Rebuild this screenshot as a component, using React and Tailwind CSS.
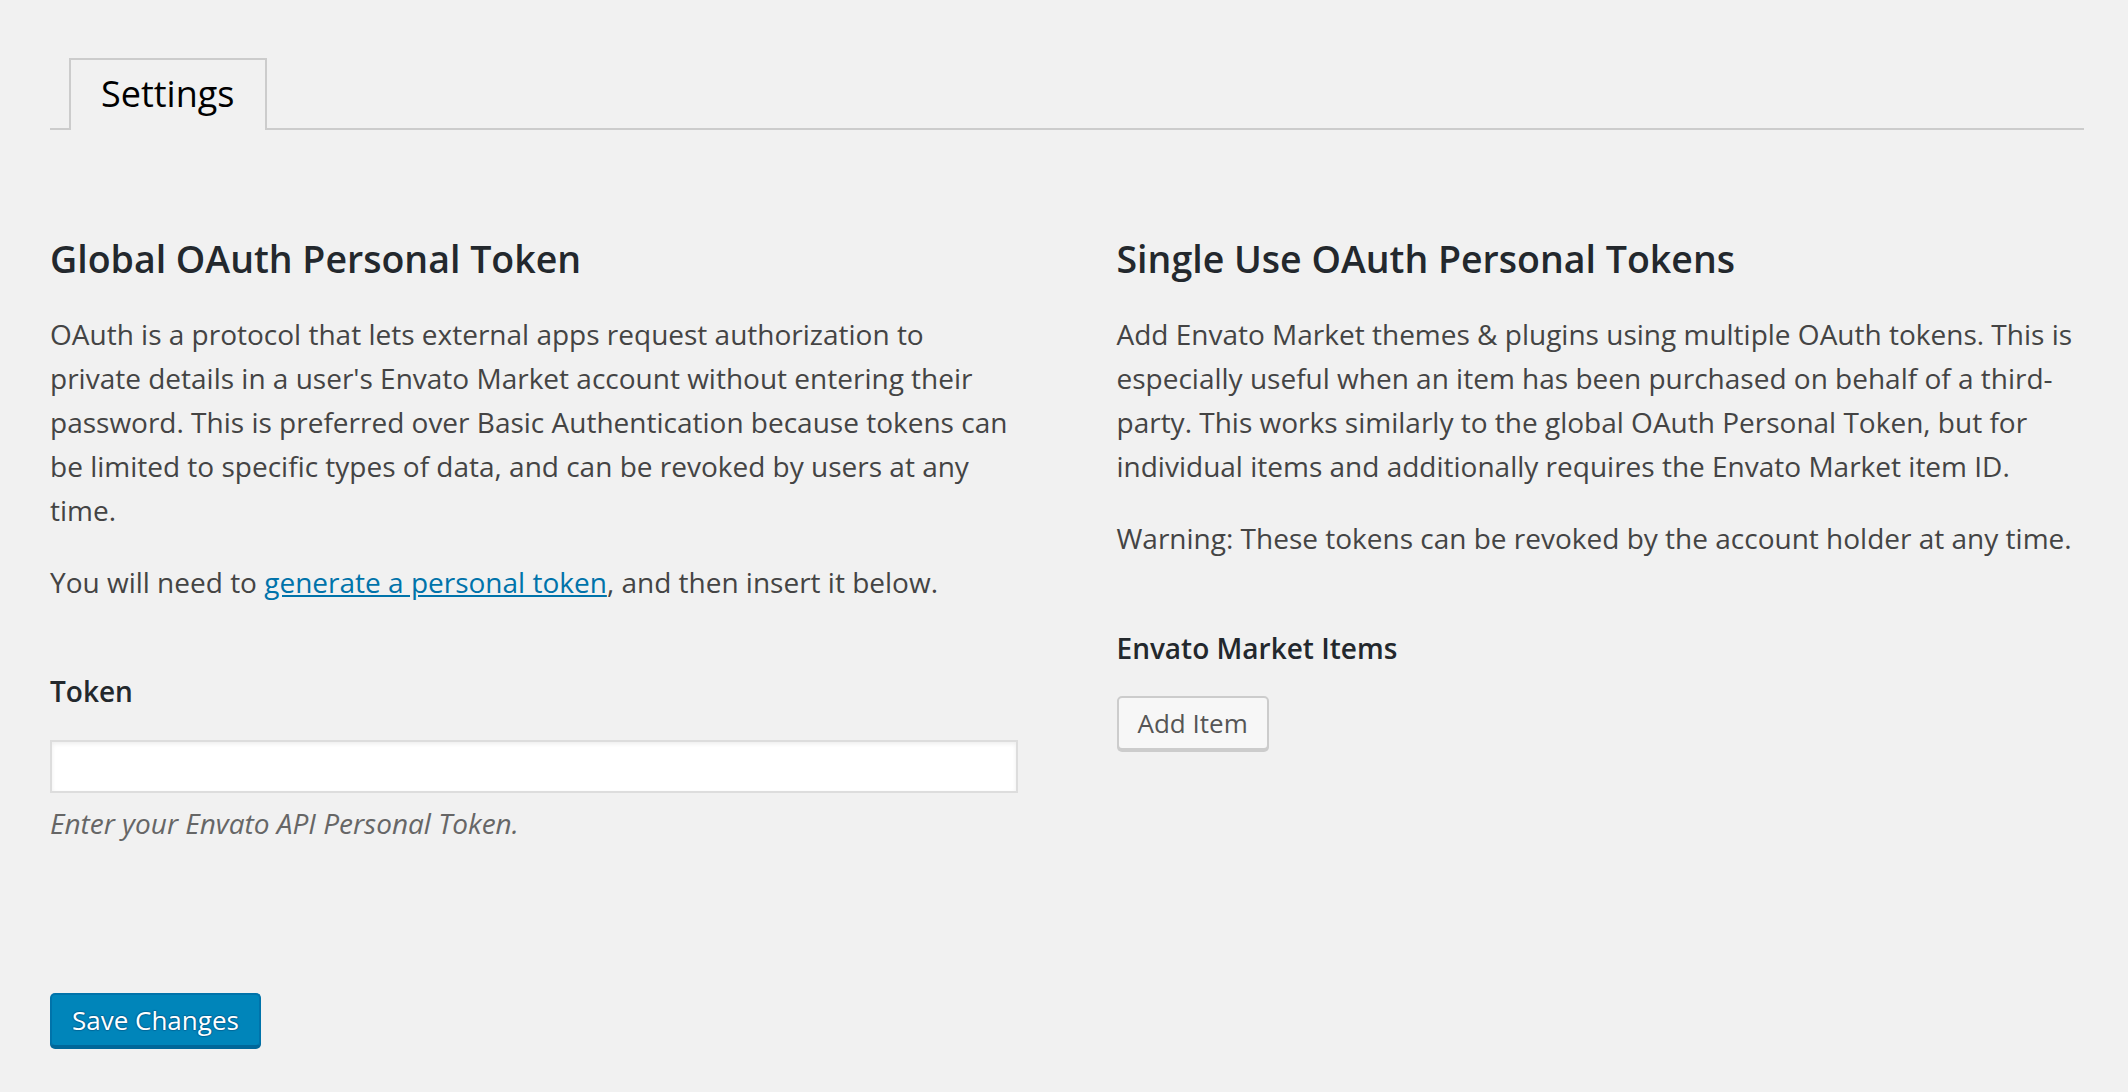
const SettingsPage = () => {
  return (
    <div className="min-h-screen bg-[#f1f1f1] pl-[50px] pr-[44px] pt-[58px] pb-10 font-['Open_Sans',sans-serif] text-[#444]">
      <div className="flex border-b-2 border-[#ccc] pl-[19px]">
        <div className="-mb-[2px] border-2 border-b-0 border-[#ccc] bg-[#f1f1f1] px-[30px] pt-[11px] pb-[13px] text-[36px] leading-[46px] text-[#000]">
          Settings
        </div>
      </div>

      <div className="mt-[105px] grid grid-cols-2 gap-[99px]">
        <div>
          <h2 className="text-[37.5px] leading-[47px] font-semibold text-[#23282d]">
            Global OAuth Personal Token
          </h2>
          <p className="mt-[30px] text-[28px] leading-[44px]">
            OAuth is a protocol that lets external apps request authorization to
            private details in a user's Envato Market account without entering
            their password. This is preferred over Basic Authentication because
            tokens can be limited to specific types of data, and can be revoked
            by users at any time.
          </p>
          <p className="mt-[28px] text-[28px] leading-[44px]">
            You will need to{" "}
            <a href="#" className="text-[#0073aa] underline">
              generate a personal token
            </a>
            , and then insert it below.
          </p>
          <h3 className="mt-[65px] text-[28px] leading-[44px] font-semibold text-[#23282d]">
            Token
          </h3>
          <input
            type="text"
            className="mt-[27px] block h-[53px] w-full border-2 border-[#ddd] bg-white px-3 text-[28px] shadow-[inset_0_2px_4px_rgba(0,0,0,0.07)] outline-none"
          />
          <p className="mt-[8px] text-[28px] leading-[44px] italic text-[#666]">
            Enter your Envato API Personal Token.
          </p>
        </div>

        <div>
          <h2 className="text-[37.5px] leading-[47px] font-semibold text-[#23282d]">
            Single Use OAuth Personal Tokens
          </h2>
          <p className="mt-[30px] text-[28px] leading-[44px]">
            Add Envato Market themes &amp; plugins using multiple OAuth tokens.
            This is especially useful when an item has been purchased on behalf
            of a third-party. This works similarly to the global OAuth Personal
            Token, but for individual items and additionally requires the Envato
            Market item ID.
          </p>
          <p className="mt-[28px] text-[28px] leading-[44px]">
            Warning: These tokens can be revoked by the account holder at any
            time.
          </p>
          <h3 className="mt-[66px] text-[28px] leading-[44px] font-semibold text-[#23282d]">
            Envato Market Items
          </h3>
          <button className="mt-[26px] h-[54px] rounded-[5px] border-2 border-[#ccc] bg-[#f7f7f7] px-[19px] text-[26px] leading-[48px] text-[#555] shadow-[0_2px_0_#ccc]">
            Add Item
          </button>
        </div>
      </div>

      <button className="mt-[148px] h-[54px] rounded-[5px] border-2 border-[#0073aa] border-b-[#006799] bg-[#0085ba] px-[20px] text-[26px] leading-[48px] text-white shadow-[0_2px_0_#006799] [text-shadow:0_-1px_1px_#006799,1px_0_1px_#006799,0_1px_1px_#006799,-1px_0_1px_#006799]">
        Save Changes
      </button>
    </div>
  );
};

export default SettingsPage;
